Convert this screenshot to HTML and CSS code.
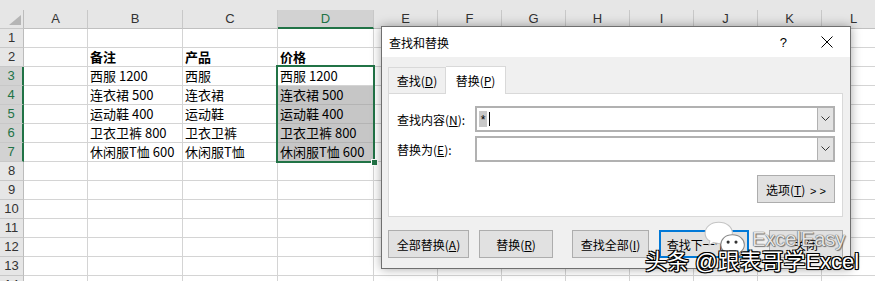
FILE: index.html
```html
<!DOCTYPE html>
<html lang="zh-CN">
<head>
<meta charset="utf-8">
<title>查找和替换</title>
<link rel="stylesheet" href="styles.css">
</head>
<body>
<div class="sheet">
  <div class="topbar"></div>
  <div class="row head">
    <div class="c rh corner"><span class="tri"></span></div>
    <div class="c">A</div><div class="c">B</div><div class="c">C</div><div class="c hsel">D</div>
    <div class="c">E</div><div class="c">F</div><div class="c">G</div><div class="c">H</div>
    <div class="c">I</div><div class="c">J</div><div class="c">K</div><div class="c">L</div>
  </div>
  <div class="row"><div class="c rh">1</div><div class="c"></div><div class="c"></div><div class="c"></div><div class="c"></div><div class="c"></div><div class="c"></div><div class="c"></div><div class="c"></div><div class="c"></div><div class="c"></div><div class="c"></div><div class="c"></div></div>
  <div class="row"><div class="c rh">2</div><div class="c"></div><div class="c b">备注</div><div class="c b">产品</div><div class="c b">价格</div><div class="c"></div><div class="c"></div><div class="c"></div><div class="c"></div><div class="c"></div><div class="c"></div><div class="c"></div><div class="c"></div></div>
  <div class="row"><div class="c rh rsel">3</div><div class="c"></div><div class="c">西服 1200</div><div class="c">西服</div><div class="c">西服 1200</div><div class="c"></div><div class="c"></div><div class="c"></div><div class="c"></div><div class="c"></div><div class="c"></div><div class="c"></div><div class="c"></div></div>
  <div class="row"><div class="c rh rsel">4</div><div class="c"></div><div class="c">连衣裙 500</div><div class="c">连衣裙</div><div class="c sel">连衣裙 500</div><div class="c"></div><div class="c"></div><div class="c"></div><div class="c"></div><div class="c"></div><div class="c"></div><div class="c"></div><div class="c"></div></div>
  <div class="row"><div class="c rh rsel">5</div><div class="c"></div><div class="c">运动鞋 400</div><div class="c">运动鞋</div><div class="c sel">运动鞋 400</div><div class="c"></div><div class="c"></div><div class="c"></div><div class="c"></div><div class="c"></div><div class="c"></div><div class="c"></div><div class="c"></div></div>
  <div class="row"><div class="c rh rsel">6</div><div class="c"></div><div class="c">卫衣卫裤 800</div><div class="c">卫衣卫裤</div><div class="c sel">卫衣卫裤 800</div><div class="c"></div><div class="c"></div><div class="c"></div><div class="c"></div><div class="c"></div><div class="c"></div><div class="c"></div><div class="c"></div></div>
  <div class="row"><div class="c rh rsel">7</div><div class="c"></div><div class="c">休闲服T恤 600</div><div class="c">休闲服T恤</div><div class="c sel">休闲服T恤 600</div><div class="c"></div><div class="c"></div><div class="c"></div><div class="c"></div><div class="c"></div><div class="c"></div><div class="c"></div><div class="c"></div></div>
  <div class="row"><div class="c rh">8</div><div class="c"></div><div class="c"></div><div class="c"></div><div class="c"></div><div class="c"></div><div class="c"></div><div class="c"></div><div class="c"></div><div class="c"></div><div class="c"></div><div class="c"></div><div class="c"></div></div>
  <div class="row"><div class="c rh">9</div><div class="c"></div><div class="c"></div><div class="c"></div><div class="c"></div><div class="c"></div><div class="c"></div><div class="c"></div><div class="c"></div><div class="c"></div><div class="c"></div><div class="c"></div><div class="c"></div></div>
  <div class="row"><div class="c rh">10</div><div class="c"></div><div class="c"></div><div class="c"></div><div class="c"></div><div class="c"></div><div class="c"></div><div class="c"></div><div class="c"></div><div class="c"></div><div class="c"></div><div class="c"></div><div class="c"></div></div>
  <div class="row"><div class="c rh">11</div><div class="c"></div><div class="c"></div><div class="c"></div><div class="c"></div><div class="c"></div><div class="c"></div><div class="c"></div><div class="c"></div><div class="c"></div><div class="c"></div><div class="c"></div><div class="c"></div></div>
  <div class="row"><div class="c rh">12</div><div class="c"></div><div class="c"></div><div class="c"></div><div class="c"></div><div class="c"></div><div class="c"></div><div class="c"></div><div class="c"></div><div class="c"></div><div class="c"></div><div class="c"></div><div class="c"></div></div>
  <div class="row"><div class="c rh">13</div><div class="c"></div><div class="c"></div><div class="c"></div><div class="c"></div><div class="c"></div><div class="c"></div><div class="c"></div><div class="c"></div><div class="c"></div><div class="c"></div><div class="c"></div><div class="c"></div></div>
  <div class="row"><div class="c rh">14</div><div class="c"></div><div class="c"></div><div class="c"></div><div class="c"></div><div class="c"></div><div class="c"></div><div class="c"></div><div class="c"></div><div class="c"></div><div class="c"></div><div class="c"></div><div class="c"></div></div>

  <div class="selbox"><span class="handle"></span></div>
</div>

<div class="dialog">
  <div class="titlebar">
    <span class="title">查找和替换</span>
    <span class="help">?</span>
    <svg class="close" width="12" height="12" viewBox="0 0 12 12"><path d="M0.5 0.5 L11.5 11.5 M11.5 0.5 L0.5 11.5" stroke="#000" stroke-width="1" fill="none"/></svg>
  </div>
  <div class="dbody">
    <div class="tabs">
      <div class="tab">查找(<u>D</u>)</div>
      <div class="tab active">替换(<u>P</u>)</div>
    </div>
    <div class="panel">
      <div class="field">
        <span class="label">查找内容(<u>N</u>):</span>
        <div class="combo">
          <div class="value"><span class="hl">*</span><span class="caret"></span></div>
          <div class="drop"><svg width="9" height="6" viewBox="0 0 9 6"><path d="M0.5 0.5 L4.5 4.5 L8.5 0.5" stroke="#333" stroke-width="1" fill="none"/></svg></div>
        </div>
      </div>
      <div class="field">
        <span class="label">替换为(<u>E</u>):</span>
        <div class="combo">
          <div class="value"></div>
          <div class="drop"><svg width="9" height="6" viewBox="0 0 9 6"><path d="M0.5 0.5 L4.5 4.5 L8.5 0.5" stroke="#333" stroke-width="1" fill="none"/></svg></div>
        </div>
      </div>
      <div class="optrow">
        <button class="btn opt">选项(<u>T</u>) <span class="gt">&gt; &gt;</span></button>
      </div>
    </div>
    <div class="btnrow">
      <button class="btn w81">全部替换(<u>A</u>)</button>
      <button class="btn w74 g10">替换(<u>R</u>)</button>
      <button class="btn w77 g19">查找全部(<u>I</u>)</button>
      <button class="btn w90 g10 focus">查找下一个(<u>F</u>)</button>
      <button class="btn w74 g20">关闭</button>
    </div>
  </div>
</div>

<div class="wm">
  <svg class="wechat" width="44" height="40" viewBox="0 0 42 38">
    <path d="M15 2 C7 2 2 7 2 12.5 C2 16 4 18.5 6.5 20 L5.5 24 L10 21.5 C11.5 22 13 22.3 15 22.3 C23 22.3 28 17.5 28 12.2 C28 7 23 2 15 2 Z" fill="#fff" stroke="#c4c4c4" stroke-width="1"/>
    <path d="M28 14 C21 14 17 18.5 17 23.5 C17 28.5 21.5 33 28 33 C29.5 33 31 32.8 32 32.4 L36 34.5 L35 31 C38 29 39.5 26.5 39.5 23.5 C39.5 18.5 35 14 28 14 Z" fill="#fff" stroke="#8a8a8a" stroke-width="1"/>
    <circle cx="24" cy="21" r="1.5" fill="#333"/>
    <circle cx="31.5" cy="21" r="1.5" fill="#333"/>
  </svg>
  <span class="wm1">ExcelEasy</span>
  <span class="wm2">头条 @跟表哥学Excel</span>
</div>
</body>
</html>
```
FILE: styles.css
```css
* { box-sizing: border-box; }
html, body { margin: 0; padding: 0; }
body {
  width: 875px;
  height: 281px;
  overflow: hidden;
  background: #fff;
  position: relative;
  font-family: "Noto Sans CJK SC", sans-serif;
}

.sheet { width: 875px; }
.topbar { height: 10px; background: #e6e6e6; }

.row {
  display: grid;
  grid-template-columns: 24px 64px 95px 95px 96px 64px 64px 64px 64px 64px 64px 64px 64px;
  height: 19px;
}
.c {
  border-right: 1px solid #d4d4d4;
  border-bottom: 1px solid #d4d4d4;
  font-size: 13px;
  line-height: 18px;
  color: #000;
  padding-left: 2px;
  white-space: nowrap;
  overflow: hidden;
}
.c.b { font-weight: bold; }

.head .c {
  background: #e6e6e6;
  border-right: 1px solid #c8c8c8;
  border-bottom: 1px solid #c0c0c0;
  text-align: center;
  padding-left: 0;
  font-family: "Liberation Sans", sans-serif;
  font-size: 13px;
  line-height: 18px;
  color: #333;
}
.head .c.hsel {
  background: #d2d2d2;
  color: #217346;
  border-bottom: 2px solid #217346;
  line-height: 17px;
}
.rh {
  background: #e6e6e6;
  border-right: 1px solid #bcbcbc !important;
  border-bottom: 1px solid #c8c8c8 !important;
  text-align: center;
  padding-left: 0;
  font-family: "Liberation Sans", sans-serif;
  font-size: 13px;
  color: #333;
}
.rh.rsel {
  background: #d2d2d2;
  color: #217346;
  border-right: 2px solid #217346 !important;
}
.corner { position: relative; }
.tri {
  position: absolute;
  right: 2px;
  bottom: 3px;
  width: 0;
  height: 0;
  border-left: 12px solid transparent;
  border-bottom: 10px solid #b5b5b5;
}
.c.sel {
  background: #c6c6c6;
  border-bottom-color: #b4b4b4;
}

.selbox {
  position: absolute;
  left: 276px;
  top: 65px;
  width: 99px;
  height: 98px;
  border: 2px solid #217346;
}
.handle {
  position: absolute;
  right: -5px;
  bottom: -5px;
  width: 7px;
  height: 7px;
  background: #217346;
  border: 1px solid #fff;
}

/* Dialog */
.dialog {
  position: absolute;
  left: 381px;
  top: 26px;
  width: 470px;
  height: 243px;
  background: #f0f0f0;
  border: 1px solid #6f6f6f;
  box-shadow: 0 0 10px rgba(0,0,0,0.35);
  font-family: "Noto Sans CJK SC", sans-serif;
  font-size: 12px;
  color: #000;
  display: flex;
  flex-direction: column;
}
.titlebar {
  height: 30px;
  background: #fff;
  display: flex;
  align-items: center;
  padding-left: 7px;
}
.title { font-size: 12px; flex: 1; }
.help {
  font-family: "Liberation Sans", sans-serif;
  font-size: 13px;
  margin-right: 34px;
}
.close { margin-right: 17px; }

.dbody {
  padding: 9px 7px 0 6px;
  display: flex;
  flex-direction: column;
}
.tabs {
  display: flex;
  align-items: flex-end;
  height: 27px;
  position: relative;
  z-index: 1;
}
.tab {
  height: 26px;
  border: 1px solid #d9d9d9;
  border-bottom: none;
  padding: 0;
  width: 58px;
  text-align: center;
  line-height: 26px;
  background: #f0f0f0;
}
.tab.active {
  width: 60px;
  height: 28px;
  margin-bottom: -1px;
  background: #fff;
  border-left: none;
  line-height: 28px;
}
.panel {
  height: 124px;
  background: #fff;
  border: 1px solid #d9d9d9;
  padding: 12px 7px 0 8px;
  display: flex;
  flex-direction: column;
}
.field {
  display: flex;
  align-items: center;
  height: 26px;
  margin-bottom: 4px;
}
.label { width: 78px; }
.combo {
  flex: 1;
  height: 26px;
  border: 2px solid #b1b1b1;
  display: flex;
  background: #fff;
}
.value {
  flex: 1;
  display: flex;
  align-items: center;
  padding-left: 2px;
}
.hl {
  background: #c8c8c8;
  width: 8px;
  height: 16px;
  line-height: 18px;
  text-align: center;
  font-family: "Liberation Sans", sans-serif;
  font-size: 12px;
}
.caret {
  width: 1px;
  height: 14px;
  background: #000;
  margin-left: 2px;
}
.drop {
  width: 16px;
  background: #e3e3e3;
  border-left: 1px solid #b1b1b1;
  display: flex;
  align-items: center;
  justify-content: center;
}
.optrow {
  display: flex;
  justify-content: flex-end;
  margin-top: 9px;
}
.btn {
  height: 28px;
  background: #e1e1e1;
  border: 1px solid #adadad;
  font-family: "Noto Sans CJK SC", sans-serif;
  font-size: 12px;
  color: #000;
  padding: 0;
  margin: 0;
}
.btn.opt { width: 78px; }
.gt { font-family: "Liberation Sans", sans-serif; font-size: 11px; margin-left: 2px; }
.btn.focus { border: 2px solid #0078d7; }
.btnrow {
  display: flex;
  margin-top: 13px;
}
.w81 { width: 81px; }
.w74 { width: 74px; }
.w77 { width: 77px; }
.w90 { width: 90px; }
.g10 { margin-left: 10px; }
.g19 { margin-left: 19px; }
.g20 { margin-left: 20px; }
u { text-decoration: underline; text-underline-offset: 1px; }

/* Watermark overlay */
.wm { position: absolute; left: 0; top: 0; width: 875px; height: 281px; pointer-events: none; }
.wechat { position: absolute; left: 703px; top: 220px; }
.wm1 {
  position: absolute;
  left: 752px;
  top: 227px;
  font-family: "Liberation Sans", sans-serif;
  font-size: 20px;
  line-height: 24px;
  color: #e4e4e4;
  text-shadow: 0 0 1px #555, 0 0 1px #555, 1px 1px 1px rgba(0,0,0,0.45);
}
.wm2 {
  position: absolute;
  left: 645px;
  top: 248px;
  font-family: "Liberation Sans", "Noto Sans CJK SC", sans-serif;
  font-size: 22px;
  line-height: 28px;
  color: #fff;
  white-space: nowrap;
  text-shadow: 1px 1px 0 #000, -1px -1px 0 #000, 1px -1px 0 #000, -1px 1px 0 #000, 0 1px 1px #000, 1px 0 1px #000;
}
```
